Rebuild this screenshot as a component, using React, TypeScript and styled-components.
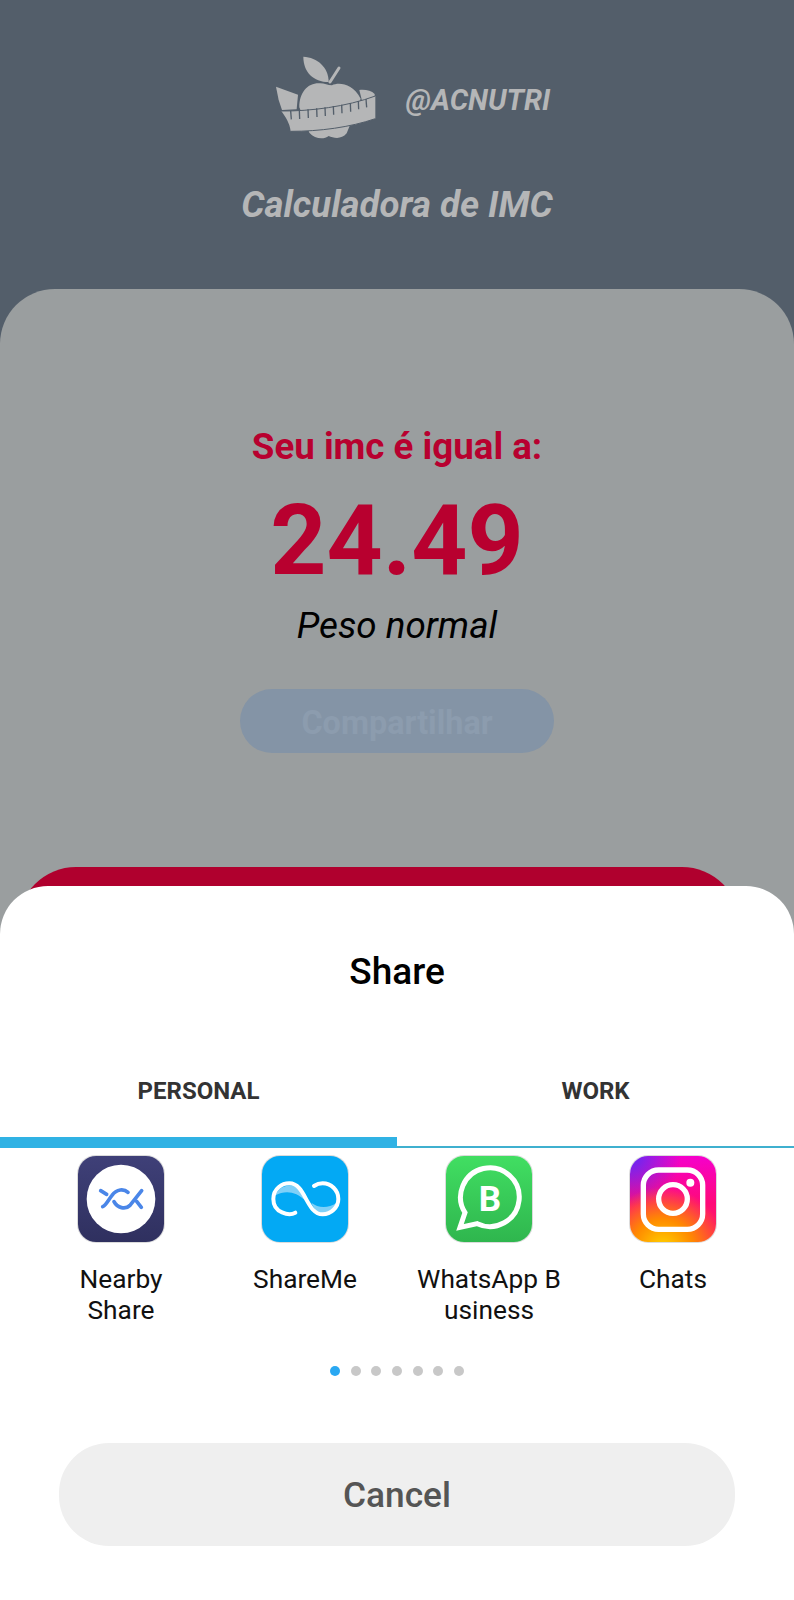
import React from "react";
import styled, { createGlobalStyle } from "styled-components";

const GlobalStyle = createGlobalStyle`
  html, body {
    margin: 0;
    padding: 0;
    background: #535e6a;
    font-family: Roboto, "Liberation Sans", sans-serif;
  }
`;

const Screen = styled.div`
  position: relative;
  width: 794px;
  height: 1600px;
  overflow: hidden;
  background: #535e6a;
`;

const Header = styled.header`
  display: flex;
  flex-direction: column;
  align-items: center;
  height: 289px;
  padding-top: 50px;
  box-sizing: border-box;
`;

const BrandRow = styled.div`
  display: flex;
  align-items: center;
  gap: 26px;
  height: 100px;
  padding-left: 26px;
`;

const Handle = styled.span`
  font-size: 29px;
  font-weight: 700;
  font-style: italic;
  color: #b5b6b7;
`;

const Title = styled.h1`
  margin: 35px 0 0;
  font-size: 36.6px;
  line-height: 40px;
  font-weight: 700;
  font-style: italic;
  color: #b5b6b7;
`;

const Panel = styled.main`
  height: 1311px;
  padding-top: 137px;
  box-sizing: border-box;
  display: flex;
  flex-direction: column;
  align-items: center;
  background: #9a9e9f;
  border-radius: 55px 55px 0 0;
`;

const ResultLabel = styled.div`
  font-size: 36.7px;
  line-height: 42px;
  font-weight: 700;
  color: #b8002f;
`;

const ResultValue = styled.div`
  margin-top: 18px;
  font-size: 98px;
  line-height: 110px;
  font-weight: 700;
  color: #b8002f;
`;

const ResultStatus = styled.div`
  margin-top: 10px;
  font-size: 36.8px;
  line-height: 40px;
  font-style: italic;
  color: #000;
`;

const ShareButton = styled.div`
  display: flex;
  align-items: center;
  justify-content: center;
  width: 314px;
  height: 64px;
  margin-top: 43px;
  padding-top: 3px;
  box-sizing: border-box;
  border-radius: 32px;
  background: #8494a6;
  color: #8c9cae;
  font-size: 32.4px;
  font-weight: 700;
`;

const CalcButton = styled.div`
  align-self: flex-start;
  width: 722px;
  height: 120px;
  margin: 114px 0 0 18px;
  border-radius: 58px;
  background: #b0002e;
`;

const Sheet = styled.section`
  position: absolute;
  left: 0;
  right: 0;
  bottom: 0;
  height: 714px;
  background: #fff;
  border-radius: 48px 48px 0 0;
`;

const SheetTitle = styled.div`
  padding-top: 65px;
  font-size: 37px;
  line-height: 42px;
  font-weight: 500;
  text-align: center;
  color: #000;
`;

const Tabs = styled.div`
  display: flex;
  margin-top: 47px;
`;

const Tab = styled.div<{ $active?: boolean }>`
  flex: 1;
  height: 108px;
  box-sizing: border-box;
  padding-top: 38px;
  font-size: 24px;
  line-height: 26px;
  font-weight: 700;
  text-align: center;
  color: #333;
  border-bottom: ${(p) => (p.$active ? "11px solid #30b2e4" : "2px solid #3fb0cf")};
`;

const AppGrid = styled.div`
  display: grid;
  grid-template-columns: repeat(4, 184px);
  margin-top: 8px;
  padding: 0 29px;
`;

const AppItem = styled.div`
  display: flex;
  flex-direction: column;
  align-items: center;
`;

const IconTile = styled.div<{ $bg: string }>`
  width: 86px;
  height: 86px;
  border-radius: 18px;
  overflow: hidden;
  background: ${(p) => p.$bg};
  box-shadow: 0 0 0 1px rgba(0, 0, 0, 0.14);

  svg {
    display: block;
    width: 100%;
    height: 100%;
  }
`;

const AppLabel = styled.div`
  margin-top: 22px;
  font-size: 26.3px;
  line-height: 31px;
  text-align: center;
  color: #111;
`;

const Dots = styled.div`
  display: flex;
  justify-content: center;
  gap: 10.6px;
  margin-top: 40px;
`;

const Dot = styled.span<{ $active?: boolean }>`
  width: 10px;
  height: 10px;
  border-radius: 50%;
  background: ${(p) => (p.$active ? "#2aa8f2" : "#c8c8c8")};
`;

const CancelButton = styled.div`
  display: flex;
  align-items: center;
  justify-content: center;
  height: 103px;
  margin: 67px 59px 0;
  border-radius: 50px;
  background: #efefef;
  color: #555;
  font-size: 35.3px;
  font-weight: 500;
`;

function AppleLogo() {
  const ticks = [
    [62, 183, 64, 208],
    [88, 181, 89, 207],
    [114, 178, 115, 204],
    [140, 175, 141, 201],
    [165, 172, 166, 198],
    [190, 168, 191, 194],
    [215, 164, 216, 190],
    [241, 159, 242, 185],
    [265, 153, 266, 178],
    [288, 147, 290, 172],
  ];
  return (
    <svg width="110" height="100" viewBox="0 0 330 300">
      <path d="M100 20C142 22 176 52 176 96C130 96 100 66 100 20Z" fill="#b5b6b7" />
      <path d="M180 96L207 54" stroke="#b5b6b7" strokeWidth="9" strokeLinecap="round" />
      <path
        d="M88 172C88 128 112 100 146 100C160 98 172 106 186 106C206 96 248 100 272 146L230 250C214 270 190 264 176 258C160 270 134 266 118 248Z"
        fill="#b5b6b7"
      />
      <path d="M18 110L84 134L80 178L36 180L26 150Z" fill="#b5b6b7" />
      <path d="M268 120C286 118 304 122 314 132L314 140L276 152Z" fill="#b5b6b7" />
      <path d="M34 183C120 184 230 170 316 138L316 206C240 232 150 244 62 244C60 220 46 200 34 183Z" fill="#b5b6b7" />
      <path d="M34 183C120 184 230 170 316 138" stroke="#535e6a" strokeWidth="3" fill="none" />
      <path d="M62 244C150 244 240 232 316 206" stroke="#535e6a" strokeWidth="3" fill="none" />
      {ticks.map(([x1, y1, x2, y2]) => (
        <line key={x1} x1={x1} y1={y1} x2={x2} y2={y2} stroke="#535e6a" strokeWidth="4" />
      ))}
    </svg>
  );
}

function NearbyIcon() {
  return (
    <svg viewBox="18 18 258 258">
      <circle cx="147" cy="147" r="103" fill="#fff" />
      <g fill="none" stroke="#4a86e8" strokeWidth="11" strokeLinecap="round">
        <path d="M86 122L104 133" />
        <path d="M126 155C136 174 160 180 174 166L209 122" />
        <path d="M92 170C102 166 110 148 120 136C134 116 156 116 168 127" />
        <path d="M194 154L208 172" />
      </g>
    </svg>
  );
}

function ShareMeIcon() {
  return (
    <svg viewBox="18 18 258 258">
      <path d="M58 136C70 104 116 94 134 126L148 152C120 124 88 120 58 136Z" fill="#7fd0f8" />
      <path d="M166 158C186 174 216 176 242 158C232 184 214 194 198 192C184 190 174 176 166 158Z" fill="#7fd0f8" />
      <path
        d="M118 188C100 198 52 190 52 147C52 115 78 100 100 100C150 100 150 193 200 193C225 193 247 172 247 147C247 120 225 100 200 100C190 100 180 104 174 108"
        fill="none"
        stroke="#fff"
        strokeWidth="12"
        strokeLinecap="round"
      />
    </svg>
  );
}

function WhatsAppBusinessIcon() {
  return (
    <svg viewBox="18 18 258 258">
      <path d="M60 232L75 188A88 88 0 1 1 112 221Z" fill="none" stroke="#fff" strokeWidth="15" />
      <text x="150" y="183" textAnchor="middle" fontFamily="Roboto, sans-serif" fontWeight="700" fontSize="105" fill="#fff">
        B
      </text>
    </svg>
  );
}

function InstagramIcon() {
  return (
    <svg viewBox="18 18 258 258">
      <rect x="58" y="60" width="178" height="178" rx="46" fill="none" stroke="#fff" strokeWidth="16" />
      <circle cx="147" cy="147" r="43" fill="none" stroke="#fff" strokeWidth="16" />
      <circle cx="199" cy="98" r="12" fill="#fff" />
    </svg>
  );
}

const apps = [
  {
    name: "nearby",
    label: <>Nearby<br />Share</>,
    bg: "linear-gradient(#3f4078, #2f305f)",
    icon: <NearbyIcon />,
  },
  { name: "shareme", label: <>ShareMe</>, bg: "#03a9f4", icon: <ShareMeIcon /> },
  {
    name: "whatsapp",
    label: <>WhatsApp B<br />usiness</>,
    bg: "linear-gradient(#41de62, #2fb64e)",
    icon: <WhatsAppBusinessIcon />,
  },
  {
    name: "instagram",
    label: <>Chats</>,
    bg: "radial-gradient(circle at 38% 108%, #ffd600 0%, #ff8a00 28%, rgba(255,60,60,0) 58%), radial-gradient(circle at 0% 0%, #5c2cf5 0%, rgba(92,44,245,0) 42%), linear-gradient(#f500cc, #ff0a78 55%, #ff2a50)",
    icon: <InstagramIcon />,
  },
];

export default function App() {
  return (
    <Screen>
      <GlobalStyle />
      <Header>
        <BrandRow>
          <AppleLogo />
          <Handle>@ACNUTRI</Handle>
        </BrandRow>
        <Title>Calculadora de IMC</Title>
      </Header>
      <Panel>
        <ResultLabel>Seu imc é igual a:</ResultLabel>
        <ResultValue>24.49</ResultValue>
        <ResultStatus>Peso normal</ResultStatus>
        <ShareButton>Compartilhar</ShareButton>
        <CalcButton />
      </Panel>
      <Sheet>
        <SheetTitle>Share</SheetTitle>
        <Tabs>
          <Tab $active>PERSONAL</Tab>
          <Tab>WORK</Tab>
        </Tabs>
        <AppGrid>
          {apps.map((app) => (
            <AppItem key={app.name}>
              <IconTile $bg={app.bg}>{app.icon}</IconTile>
              <AppLabel>{app.label}</AppLabel>
            </AppItem>
          ))}
        </AppGrid>
        <Dots>
          {[0, 1, 2, 3, 4, 5, 6].map((i) => (
            <Dot key={i} $active={i === 0} />
          ))}
        </Dots>
        <CancelButton>Cancel</CancelButton>
      </Sheet>
    </Screen>
  );
}
